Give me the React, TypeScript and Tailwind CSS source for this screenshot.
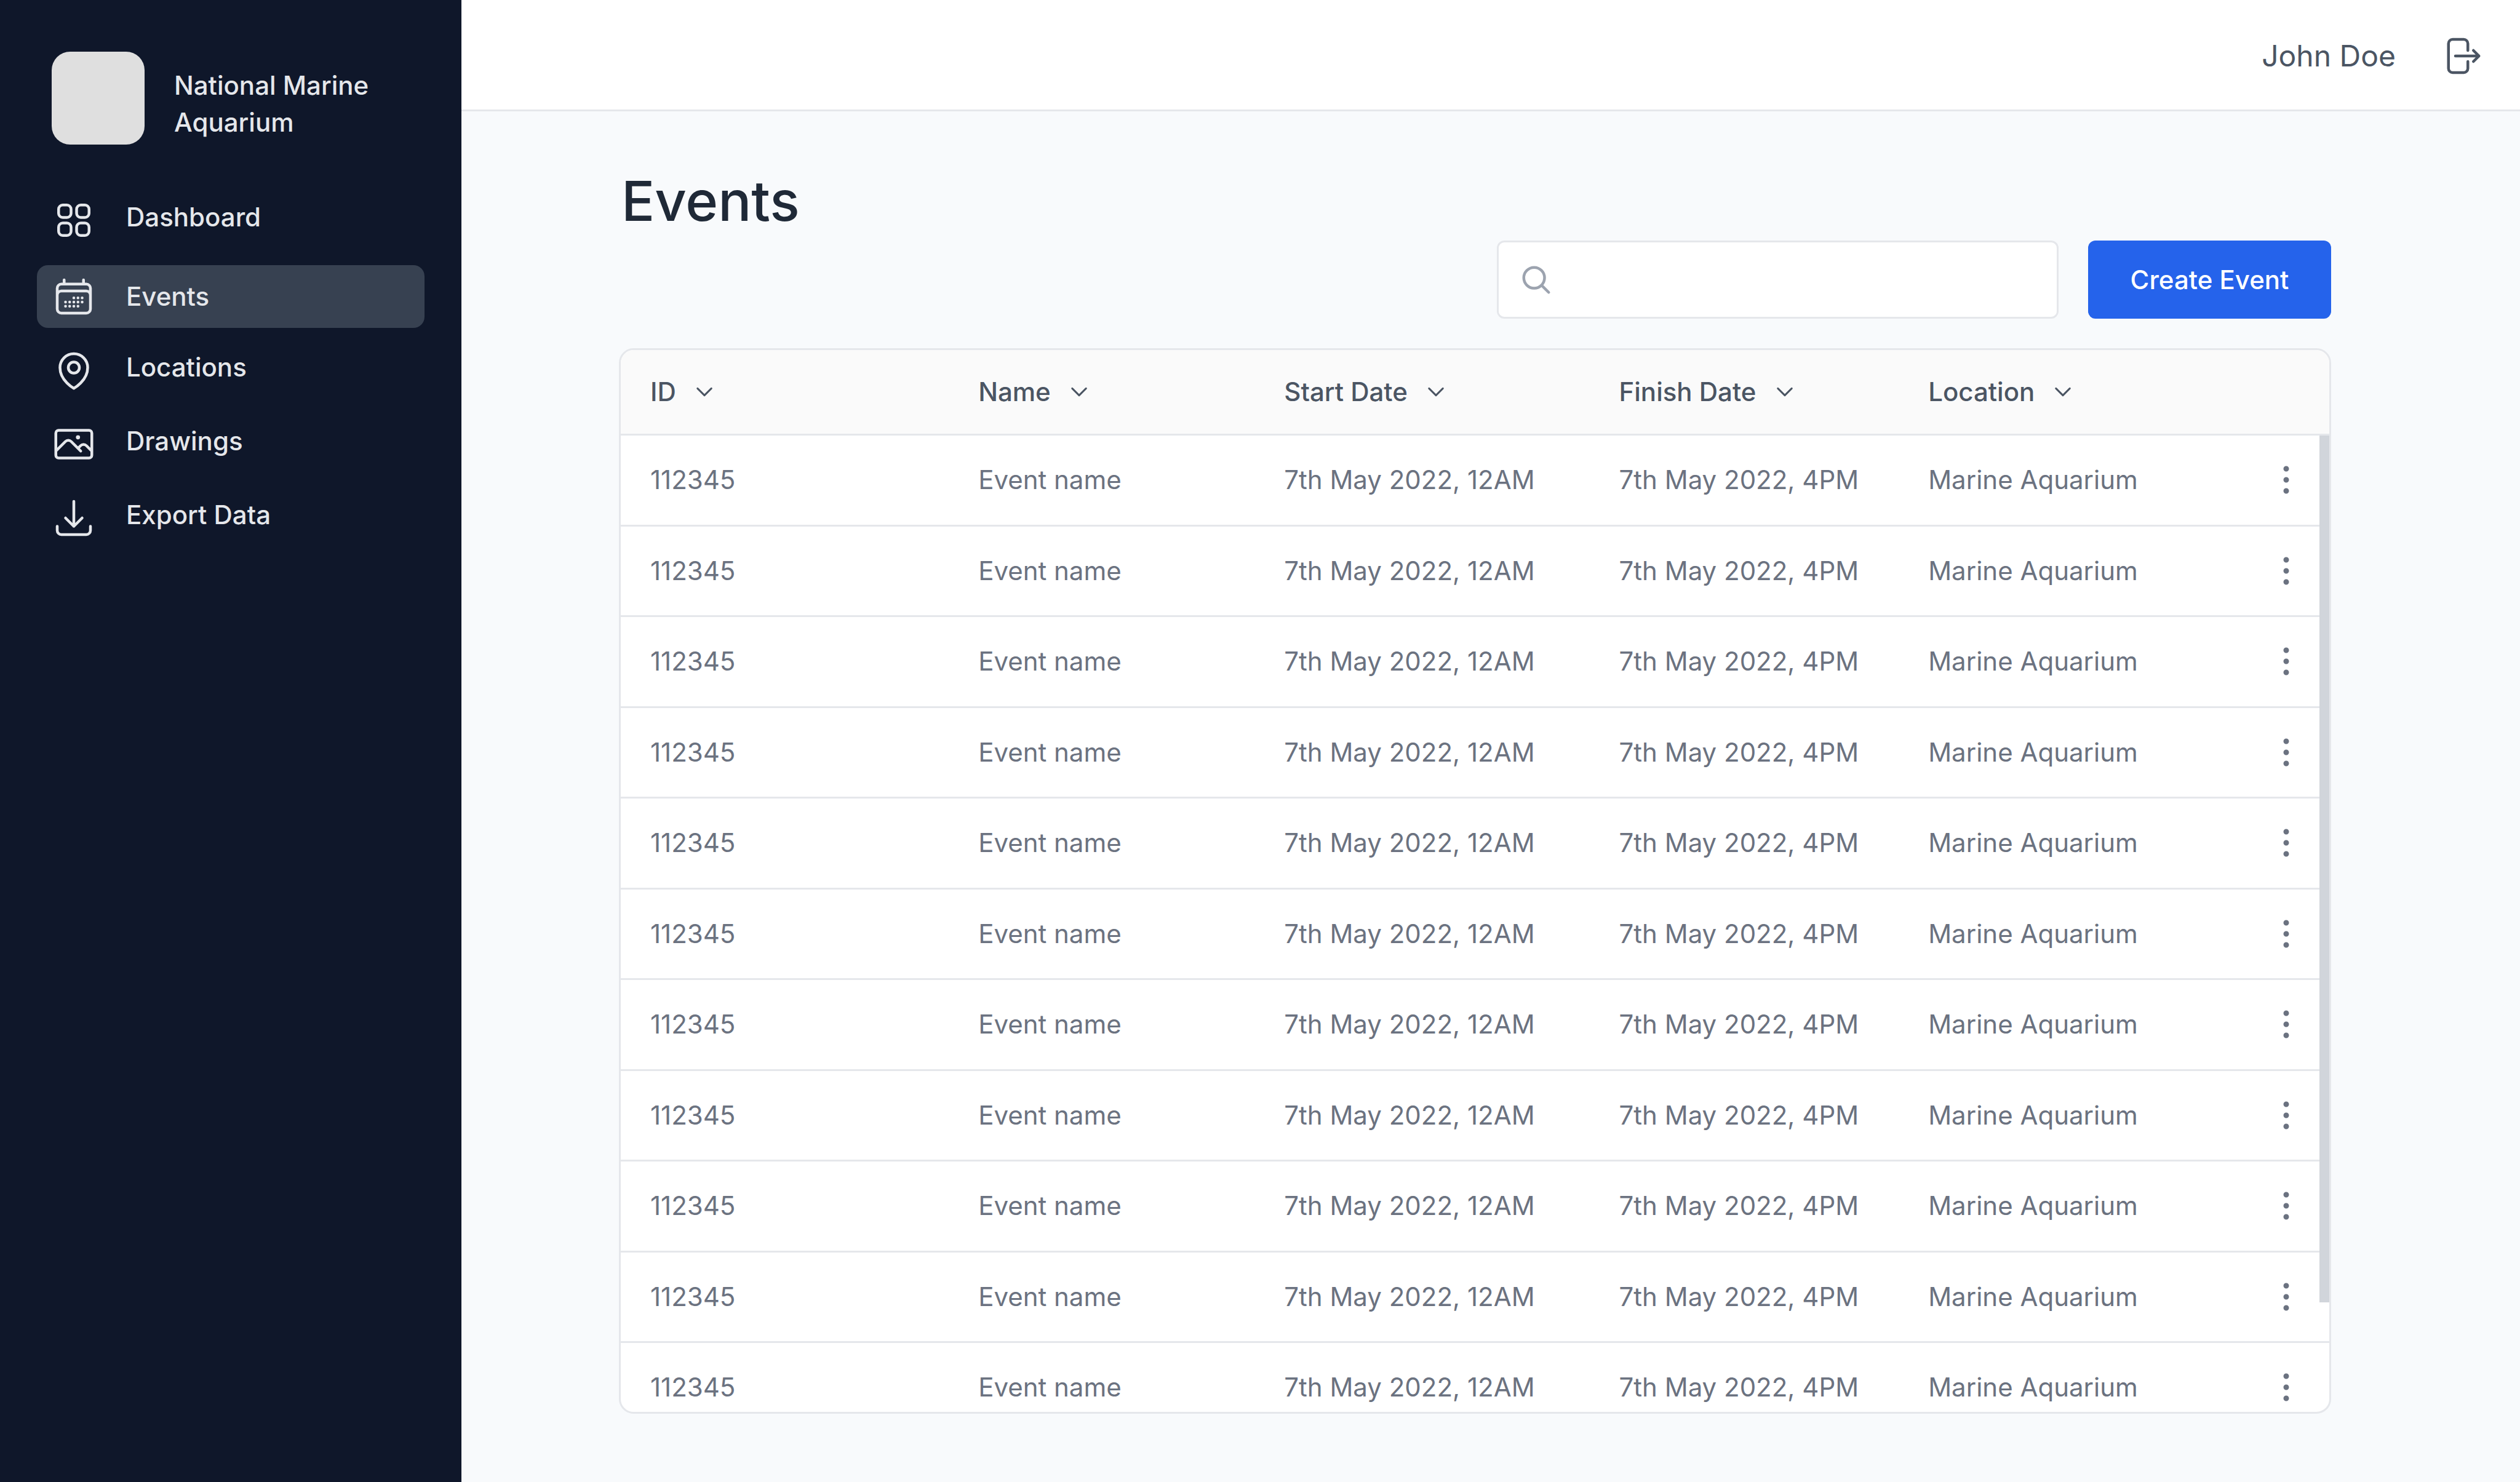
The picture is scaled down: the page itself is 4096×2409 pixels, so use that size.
import type { ReactNode } from "react";

const icons = {
  dashboard: [
    "M3.75 6A2.25 2.25 0 0 1 6 3.75h2.25A2.25 2.25 0 0 1 10.5 6v2.25a2.25 2.25 0 0 1-2.25 2.25H6a2.25 2.25 0 0 1-2.25-2.25V6ZM3.75 15.75A2.25 2.25 0 0 1 6 13.5h2.25a2.25 2.25 0 0 1 2.25 2.25V18a2.25 2.25 0 0 1-2.25 2.25H6A2.25 2.25 0 0 1 3.75 18v-2.25ZM13.5 6a2.25 2.25 0 0 1 2.25-2.25H18A2.25 2.25 0 0 1 20.25 6v2.25A2.25 2.25 0 0 1 18 10.5h-2.25a2.25 2.25 0 0 1-2.25-2.25V6ZM13.5 15.75a2.25 2.25 0 0 1 2.25-2.25H18a2.25 2.25 0 0 1 2.25 2.25V18A2.25 2.25 0 0 1 18 20.25h-2.25A2.25 2.25 0 0 1 13.5 18v-2.25Z",
  ],
  calendar: [
    "M6.75 3v2.25M17.25 3v2.25M3 18.75V7.5a2.25 2.25 0 0 1 2.25-2.25h13.5A2.25 2.25 0 0 1 21 7.5v11.25m-18 0A2.25 2.25 0 0 0 5.25 21h13.5A2.25 2.25 0 0 0 21 18.75m-18 0v-7.5A2.25 2.25 0 0 1 5.25 9h13.5A2.25 2.25 0 0 1 21 11.25v7.5m-9-6h.008v.008H12v-.008ZM12 15h.008v.008H12V15Zm0 2.25h.008v.008H12v-.008ZM9.75 15h.008v.008H9.75V15Zm0 2.25h.008v.008H9.75v-.008ZM7.5 15h.008v.008H7.5V15Zm0 2.25h.008v.008H7.5v-.008Zm6.75-4.5h.008v.008h-.008v-.008Zm0 2.25h.008v.008h-.008V15Zm0 2.25h.008v.008h-.008v-.008Zm2.25-4.5h.008v.008H16.5v-.008Zm0 2.25h.008v.008H16.5V15Z",
  ],
  pin: [
    "M15 10.5a3 3 0 1 1-6 0 3 3 0 0 1 6 0Z",
    "M19.5 10.5c0 7.142-7.5 11.25-7.5 11.25S4.5 17.642 4.5 10.5a7.5 7.5 0 1 1 15 0Z",
  ],
  photo: [
    "m2.25 15.75 5.159-5.159a2.25 2.25 0 0 1 3.182 0l5.159 5.159m-1.5-1.5 1.409-1.409a2.25 2.25 0 0 1 3.182 0l2.909 2.909m-18 3.75h16.5a1.5 1.5 0 0 0 1.5-1.5V6a1.5 1.5 0 0 0-1.5-1.5H3.75A1.5 1.5 0 0 0 2.25 6v12a1.5 1.5 0 0 0 1.5 1.5Zm10.5-11.25h.008v.008h-.008V8.25Zm.375 0a.375.375 0 1 1-.75 0 .375.375 0 0 1 .75 0Z",
  ],
  download: ["M3 16.5v2.25A2.25 2.25 0 0 0 5.25 21h13.5A2.25 2.25 0 0 0 21 18.75V16.5M16.5 12 12 16.5m0 0L7.5 12m4.5 4.5V3"],
  logout: [
    "M15.75 9V5.25A2.25 2.25 0 0 0 13.5 3h-6a2.25 2.25 0 0 0-2.25 2.25v13.5A2.25 2.25 0 0 0 7.5 21h6a2.25 2.25 0 0 0 2.25-2.25V15m3 0 3-3m0 0-3-3m3 3H9",
  ],
  search: ["m21 21-5.197-5.197m0 0A7.5 7.5 0 1 0 5.196 5.196a7.5 7.5 0 0 0 10.607 10.607Z"],
  chevron: ["m19.5 8.25-7.5 7.5-7.5-7.5"],
  kebab: [
    "M12 6.75a.75.75 0 1 1 0-1.5.75.75 0 0 1 0 1.5ZM12 12.75a.75.75 0 1 1 0-1.5.75.75 0 0 1 0 1.5ZM12 18.75a.75.75 0 1 1 0-1.5.75.75 0 0 1 0 1.5Z",
  ],
};

type IconName = keyof typeof icons;

function Icon({
  name,
  className,
  strokeWidth = 1.5,
}: {
  name: IconName;
  className: string;
  strokeWidth?: number;
}) {
  return (
    <svg
      className={className}
      viewBox="0 0 24 24"
      fill="none"
      stroke="currentColor"
      strokeWidth={strokeWidth}
      strokeLinecap="round"
      strokeLinejoin="round"
      aria-hidden="true"
    >
      {icons[name].map((d) => (
        <path key={d} d={d} />
      ))}
    </svg>
  );
}

const navItems: { label: string; icon: IconName; active?: boolean }[] = [
  { label: "Dashboard", icon: "dashboard" },
  { label: "Events", icon: "calendar", active: true },
  { label: "Locations", icon: "pin" },
  { label: "Drawings", icon: "photo" },
  { label: "Export Data", icon: "download" },
];

const columns = ["ID", "Name", "Start Date", "Finish Date", "Location"];

const events = Array.from({ length: 11 }, (_, index) => ({
  key: index,
  id: "112345",
  name: "Event name",
  start: "7th May 2022, 12AM",
  finish: "7th May 2022, 4PM",
  location: "Marine Aquarium",
}));

function Sidebar() {
  return (
    <aside className="w-[750px] shrink-0 bg-[#0f172a] px-[60px] pt-[84px] text-[42px] leading-[60px] font-medium text-[#e5e7eb]">
      <div className="flex items-center gap-12 px-6">
        <div className="size-[151px] shrink-0 rounded-[30px] bg-[#dfdfdf]" />
        <p className="pt-[18px]">
          National Marine
          <br />
          Aquarium
        </p>
      </div>
      <nav className="mt-[72px]">
        <ul className="flex flex-col gap-[18px]">
          {navItems.map((item) => (
            <li key={item.label} className="first:mb-1">
              <a
                href="#"
                aria-current={item.active ? "page" : undefined}
                className={
                  item.active
                    ? "flex h-[102px] items-center gap-[49px] rounded-[18px] bg-[#374151] px-6"
                    : "flex h-[102px] items-center gap-[49px] px-6"
                }
              >
                <Icon name={item.icon} className="size-[72px] shrink-0" />
                <span className={item.active ? "" : "pb-2.5"}>{item.label}</span>
              </a>
            </li>
          ))}
        </ul>
      </nav>
    </aside>
  );
}

function Cell({ children }: { children: ReactNode }) {
  return <td className="p-0 pl-[48px] align-middle">{children}</td>;
}

function EventsTable() {
  return (
    <div className="relative mt-12 h-[1732px] overflow-hidden rounded-[24px] border-[3px] border-[#e5e7eb] bg-white">
      <table className="w-full table-fixed border-collapse text-left text-[42px] leading-[60px]">
        <colgroup>
          <col className="w-[19.2%]" />
          <col className="w-[17.9%]" />
          <col className="w-[19.6%]" />
          <col className="w-[18.1%]" />
          <col />
          <col className="w-[106px]" />
        </colgroup>
        <thead>
          <tr className="h-[137px] border-b-[3px] border-[#e5e7eb] bg-[#fafafa] text-[#4b5563]">
            {columns.map((column) => (
              <th key={column} className="p-0 pl-[48px] font-medium">
                <button type="button" className="flex items-center gap-7">
                  {column}
                  <Icon name="chevron" className="size-9 shrink-0" strokeWidth={2} />
                </button>
              </th>
            ))}
            <th className="p-0" aria-label="Actions" />
          </tr>
        </thead>
        <tbody className="text-[#6b7280]">
          {events.map((event) => (
            <tr key={event.key} className="border-b-[3px] border-[#e5e7eb] odd:h-[148px] even:h-[147px]">
              <Cell>{event.id}</Cell>
              <Cell>{event.name}</Cell>
              <Cell>{event.start}</Cell>
              <Cell>{event.finish}</Cell>
              <Cell>{event.location}</Cell>
              <td className="p-0">
                <button type="button" aria-label="Event actions" className="block">
                  <Icon name="kebab" className="size-[72px]" />
                </button>
              </td>
            </tr>
          ))}
        </tbody>
      </table>
      <div className="absolute top-[139px] right-0 h-[1409px] w-4 bg-[#d1d5db]" />
    </div>
  );
}

export default function App() {
  return (
    <div className="flex min-h-screen bg-[#f8fafc] font-[Inter,sans-serif]">
      <Sidebar />
      <div className="min-w-0 flex-1">
        <header className="flex h-[181px] items-center justify-end gap-[70px] border-b-[3px] border-[#e5e7eb] bg-white pt-[3px] pr-[60px] text-[48px] leading-[72px] text-[#4b5563]">
          <span>John Doe</span>
          <button type="button" aria-label="Log out">
            <Icon name="logout" className="block size-[72px]" />
          </button>
        </header>
        <main className="pt-[92px] pr-[307px] pl-[256px]">
          <h1 className="pl-1 text-[90px] leading-[108px] font-medium text-[#1f2937]">Events</h1>
          <div className="mt-2.5 flex justify-end gap-12">
            <label className="flex h-[127px] w-[913px] items-center rounded-[12px] border-[3px] border-[#e5e7eb] bg-white pl-[34px] text-[#9ca3af]">
              <Icon name="search" className="size-[54px] shrink-0" strokeWidth={2} />
              <input
                type="search"
                aria-label="Search events"
                className="min-w-0 flex-1 px-6 text-[42px] leading-[60px] text-[#4b5563] outline-none"
              />
            </label>
            <button
              type="button"
              className="h-[127px] w-[395px] rounded-[12px] bg-[#2563eb] text-[42px] leading-[60px] font-medium text-white"
            >
              Create Event
            </button>
          </div>
          <EventsTable />
        </main>
      </div>
    </div>
  );
}
